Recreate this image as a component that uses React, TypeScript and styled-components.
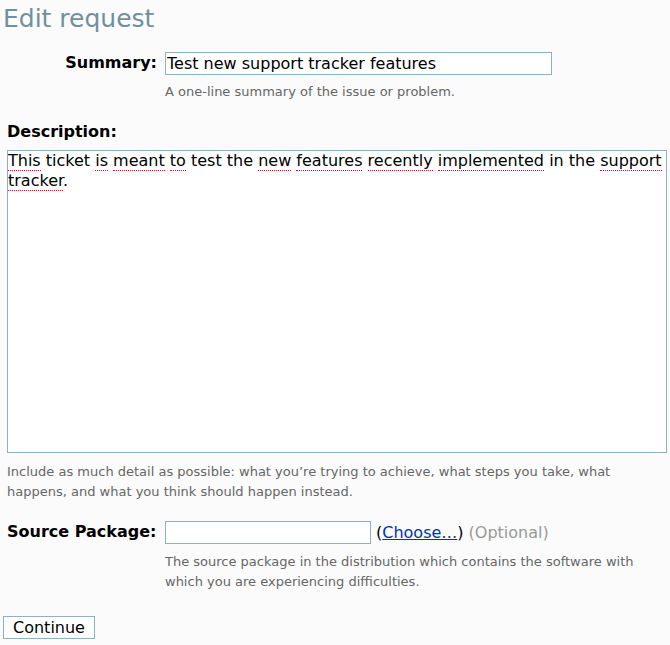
import styled, { createGlobalStyle } from "styled-components";

const GlobalStyle = createGlobalStyle`
  body {
    margin: 0;
    background: #fbfbfb;
    font-family: "DejaVu Sans", "Liberation Sans", sans-serif;
    color: #000;
  }
`;

// words the browser's spell checker flags in the description
const flagged = new Set([
  "This", "is", "meant", "to", "new", "features", "recently",
  "implemented", "support", "tracker",
]);

const description =
  "This ticket is meant to test the new features recently implemented in the support tracker.";

function DescriptionText({ text }: { text: string }) {
  const parts = text.split(/(\s+)/);
  return (
    <>
      {parts.map((part, i) => {
        const word = part.replace(/[.,]$/, "");
        if (flagged.has(word)) {
          return (
            <span key={i}>
              <Flagged>{word}</Flagged>
              {part.slice(word.length)}
            </span>
          );
        }
        return <span key={i}>{part}</span>;
      })}
    </>
  );
}

export default function App() {
  return (
    <>
      <GlobalStyle />
      <Page>
        <Heading>Edit request</Heading>
        <FieldRow>
          <RightLabel htmlFor="summary">Summary:</RightLabel>
          <div>
            <TextInput
              id="summary"
              defaultValue="Test new support tracker features"
              width={387}
            />
            <Hint>A one-line summary of the issue or problem.</Hint>
          </div>
        </FieldRow>
        <Block>
          <Label htmlFor="description">Description:</Label>
          <TextBox id="description" role="textbox" aria-multiline contentEditable suppressContentEditableWarning spellCheck={false}>
            <DescriptionText text={description} />
          </TextBox>
          <Hint $gap={9}>
            Include as much detail as possible: what you’re trying to achieve, what steps you
            take, what happens, and what you think should happen instead.
          </Hint>
        </Block>
        <FieldRow>
          <Label htmlFor="package">Source Package:</Label>
          <div>
            <Inline>
              <TextInput id="package" width={206} />
              <span>
                (<Link href="#">Choose…</Link>)
              </span>
              <Optional>(Optional)</Optional>
            </Inline>
            <Hint $gap={8}>
              The source package in the distribution which contains the software with which you
              are experiencing difficulties.
            </Hint>
          </div>
        </FieldRow>
        <Button type="button">Continue</Button>
      </Page>
    </>
  );
}

const Page = styled.div`
  padding: 3px 3px 6px 3px;
`;

const Heading = styled.h1`
  margin: 0 0 17px 0;
  font-size: 25px;
  font-weight: normal;
  color: #71909e;
  line-height: 32px;
`;

const FieldRow = styled.div`
  display: grid;
  grid-template-columns: 150px 1fr;
  column-gap: 8px;
  padding-left: 4px;
  margin-bottom: 19px;
`;

const Block = styled.div`
  padding-left: 4px;
  margin-bottom: 19px;
`;

const Label = styled.label`
  display: block;
  font-weight: bold;
  font-size: 16px;
  line-height: 22px;
  white-space: nowrap;
`;

const RightLabel = styled(Label)`
  text-align: right;
`;

const TextInput = styled.input<{ width: number }>`
  box-sizing: border-box;
  width: ${({ width }) => width}px;
  height: 23px;
  margin: 0;
  padding: 0 1px;
  border: 1px solid #8eb0c1;
  background: #fff;
  font-family: inherit;
  font-size: 16px;
  color: #000;
  outline: none;
`;

const TextBox = styled.div`
  box-sizing: border-box;
  width: 660px;
  height: 303px;
  margin-top: 7px;
  padding: 0;
  border: 1px solid #8eb0c1;
  background: #fff;
  font-size: 16px;
  line-height: 20px;
  overflow: auto;
  outline: none;
`;

const Flagged = styled.span`
  border-bottom: 1px dotted #e8141e;
`;

const Hint = styled.div<{ $gap?: number }>`
  max-width: 640px;
  margin-top: ${({ $gap = 7 }) => $gap}px;
  font-size: 13px;
  line-height: 20px;
  color: #666;
`;

const Inline = styled.div`
  display: flex;
  align-items: center;
  gap: 5px;
  font-size: 16px;
`;

const Link = styled.a`
  color: #03a;
`;

const Optional = styled.span`
  color: #999;
`;

const Button = styled.button`
  margin: 5px 0 0 0;
  padding: 1px 9px;
  border: 1px solid #8eb0c1;
  background: #fff;
  font-family: inherit;
  font-size: 16px;
  line-height: 19px;
  color: #000;
`;
